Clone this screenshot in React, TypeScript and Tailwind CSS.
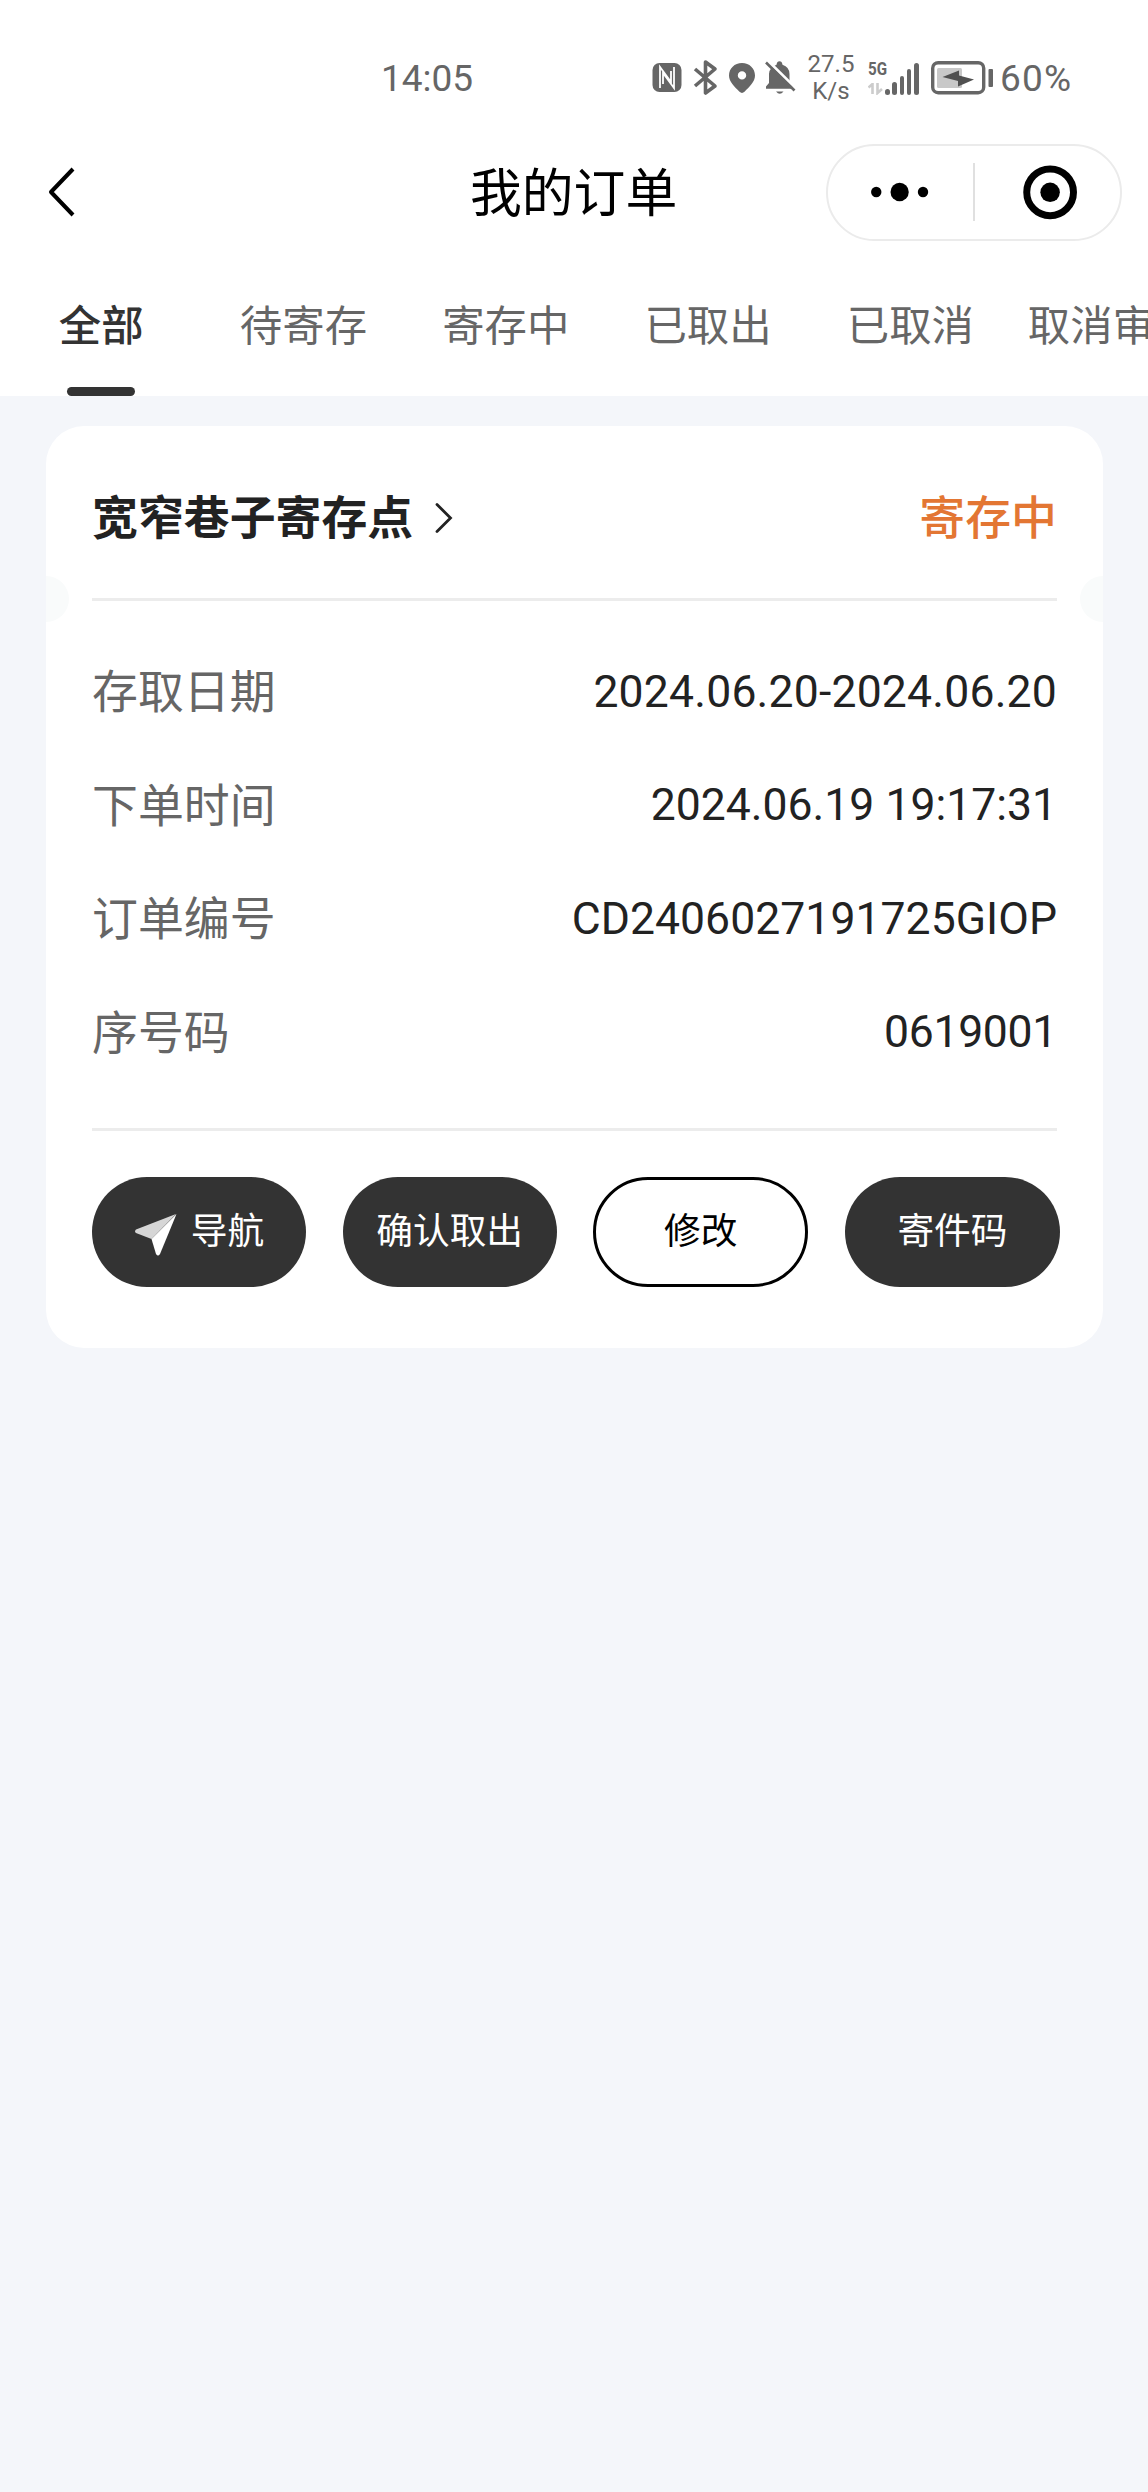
interface DetailRow {
    label: string
    value: string
    spacing: string
}

const tabs = ["全部", "待寄存", "寄存中", "已取出", "已取消", "取消审核"]

const rows: DetailRow[] = [
    { label: "存取日期", value: "2024.06.20-2024.06.20", spacing: "tracking-[0.2px]" },
    { label: "下单时间", value: "2024.06.19 19:17:31", spacing: "tracking-normal" },
    { label: "订单编号", value: "CD2406027191725GIOP", spacing: "tracking-[0.05px]" },
    { label: "序号码", value: "0619001", spacing: "tracking-[-0.3px]" },
]

function StatusIcons() {
    return (
        <svg width="144" height="36" viewBox="652 60 144 36" className="shrink-0" fill="#666">
            {/* nfc */}
            <rect x="652.5" y="63" width="29" height="29" rx="7" />
            <path d="M660 88V67L671 82V71M674 67V88L663 73V84" fill="none" stroke="#fff" strokeWidth="1.800" />
            {/* bluetooth */}
            <path d="M695 69L715 86L705.500 93V62L715 69L695 86" fill="none" stroke="#666" strokeWidth="3.600" strokeLinejoin="round" />
            {/* location */}
            <path fillRule="evenodd" d="M742 63c-7.500 0-13 5.500-13 12.500 0 6.500 5.500 11 10.500 16.300q2.500 2.200 5 0C749.500 86.500 755 82 755 75.500 755 68.500 749.500 63 742 63zm0 8.200a4.200 4.200 0 1 1 0 8.400 4.200 4.200 0 0 1 0-8.400z" />
            {/* muted bell */}
            <path d="M766 88.800v-2.300l3-3.500V74q0-6.500 7.500-9.300Q777 61.300 779.500 61.300T782.500 64.700Q789.500 67 789.500 74v9l3.500 3.500v2.300z" />
            <path d="M776 91.500h7.500q-3.700 4.500-7.500 0z" />
            <path d="M767.500 60.500L796.500 89" stroke="#fff" strokeWidth="3" />
            <path d="M766 62.500L794.500 90.500" stroke="#666" strokeWidth="2.600" />
        </svg>
    )
}

function Signal() {
    return (
        <div className="ml-[13px] flex h-[34px] w-[52px] items-end">
            <div className="flex h-full w-[17px] shrink-0 flex-col justify-between">
                <span className="origin-left scale-x-[0.8] text-[19px] font-bold leading-[16px]">5G</span>
                <svg width="16" height="12" viewBox="0 0 16 12" fill="none" stroke="#ccc" strokeWidth="2.600">
                    <path d="M0.500 4.500L4.500 1V11" />
                    <path d="M9.500 0V10L14 6" />
                </svg>
            </div>
            <div className="flex h-full items-end gap-[2.800px]">
                <i className="h-[6px] w-[4.500px] rounded-sm bg-[#666]" />
                <i className="h-[13px] w-[4.500px] rounded-sm bg-[#666]" />
                <i className="h-[19px] w-[4.500px] rounded-sm bg-[#666]" />
                <i className="h-[26px] w-[4.500px] rounded-sm bg-[#666]" />
                <i className="h-[32px] w-[4.500px] rounded-sm bg-[#666]" />
            </div>
        </div>
    )
}

function Battery() {
    return (
        <svg width="63" height="34" viewBox="931 61 63 34" className="ml-[11px] shrink-0">
            <rect x="932.700" y="62.700" width="51" height="30" rx="5.500" fill="none" stroke="#666" strokeWidth="3.400" />
            <rect x="937" y="68" width="25" height="20" rx="1.500" fill="#c8c8c8" />
            <path d="M942.500 77L959 70.500V75.500L974 79.500L958 86.500V81z" fill="#505050" />
            <rect x="988.500" y="69" width="4.500" height="18" rx="1" fill="#666" />
        </svg>
    )
}

function StatusBar() {
    return (
        <div className="flex h-[130px] items-center pl-[381px] pt-[26px] font-[Roboto,sans-serif] text-[#666]">
            <span className="w-[271px] shrink-0 text-[37px] leading-none">14:05</span>
            <StatusIcons />
            <div className="ml-[11px] w-[48px] shrink-0 text-center text-[24px] leading-[27px]">
                <div>27.5</div>
                <div>K/s</div>
            </div>
            <Signal />
            <Battery />
            <span className="ml-[6px] text-[37px] leading-none tracking-[1.2px]">60%</span>
        </div>
    )
}

function NavBar() {
    return (
        <div className="flex h-[124px] items-center pl-[48px] pr-[26px]">
            <svg width="28" height="50" viewBox="0 0 28 50" fill="none" stroke="#000" strokeWidth="4" strokeLinejoin="round">
                <path d="M25 2L3 25L25 48" />
            </svg>
            <h1 className="ml-[394px] pb-[4px] text-[51.800px] leading-none text-black">我的订单</h1>
            <div className="ml-auto flex h-[97px] w-[296px] items-center rounded-full border-2 border-[#ebebeb]">
                <svg width="146" height="60" viewBox="828 162 146 60">
                    <circle cx="876.500" cy="192" r="5.200" />
                    <circle cx="900" cy="192" r="9.200" />
                    <circle cx="923.500" cy="192" r="5.200" />
                </svg>
                <div className="h-[58px] w-[1.500px] bg-[#e0e0e0]" />
                <svg width="146" height="60" viewBox="975 162 146 60">
                    <circle cx="1050.500" cy="192.300" r="23.500" fill="none" stroke="#000" strokeWidth="7" />
                    <circle cx="1050.500" cy="192.300" r="9.800" />
                </svg>
            </div>
        </div>
    )
}

function TabBar() {
    return (
        <div className="flex h-[142px] overflow-hidden">
            {tabs.map((tab, i) => (
                <div key={tab} className="flex w-[202.300px] shrink-0 flex-col items-center justify-between pt-[48px]">
                    <span className={i === 0
                        ? "whitespace-nowrap text-[42.400px] font-medium leading-[42px] text-[#333]"
                        : "whitespace-nowrap text-[42.400px] leading-[42px] text-[#666]"}>
                        {tab}
                    </span>
                    {i === 0 && <div className="h-[9px] w-[68px] rounded-full bg-[#333]" />}
                </div>
            ))}
        </div>
    )
}

function OrderCard() {
    return (
        <div className="relative mx-[46px] mt-[30px] h-[922px] w-[1057px] overflow-hidden rounded-[38px] bg-white px-[46px]">
            {/* ticket notches */}
            <div className="absolute left-[-23px] top-[150px] size-[46px] rounded-full bg-[#f9fbfb]" />
            <div className="absolute right-[-23px] top-[150px] size-[46px] rounded-full bg-[#f9fbfb]" />

            <div className="flex h-[175px] items-center justify-between border-b-[3px] border-[#ececec] pt-[6px]">
                <div className="flex items-center text-[45.900px] font-bold leading-none text-[#222]">
                    宽窄巷子寄存点
                    <svg width="18" height="30" viewBox="0 0 18 30" fill="none" stroke="#222" strokeWidth="2.800" className="ml-[22px] mt-[5px]">
                        <path d="M2 1.500L15.500 15L2 28.500" strokeLinecap="round" />
                    </svg>
                </div>
                <span className="text-[45.900px] font-medium leading-none text-[#e37633]">寄存中</span>
            </div>

            <div className="h-[530px] border-b-[3px] border-[#ececec] pt-[34px]">
                {rows.map(row => (
                    <div key={row.label} className="flex h-[113.500px] items-center justify-between">
                        <span className="pb-[5px] text-[45.900px] leading-none text-[#666]">{row.label}</span>
                        <span className={`font-[Roboto,sans-serif] text-[44.500px] leading-none text-[#222] ${row.spacing}`}>
                            {row.value}
                        </span>
                    </div>
                ))}
            </div>

            <div className="mr-[-3px] mt-[46px] flex justify-between text-[36.700px] leading-none text-white">
                <button className="flex h-[110px] w-[214px] items-center justify-center rounded-full bg-[#333] pb-[7px]">
                    <svg width="44" height="44" viewBox="0 0 44 44" className="mr-[13px] mt-[13px]">
                        <path d="M42 1L2 16.500Q0 18.500 2 20L17.500 26z" fill="#d6d6d6" />
                        <path d="M42.500 1L17.500 26L22 41Q24 44 26 41z" fill="#fff" />
                    </svg>
                    导航
                </button>
                <button className="h-[110px] w-[214px] rounded-full bg-[#333] pb-[7px]">确认取出</button>
                <button className="h-[110px] w-[215px] rounded-full border-[3px] border-black bg-white pb-[7px] text-black">修改</button>
                <button className="h-[110px] w-[215px] rounded-full bg-[#333] pb-[7px]">寄件码</button>
            </div>
        </div>
    )
}

function App() {
    return (
        <div className="h-[2492px] w-[1148px] overflow-hidden bg-[#f4f6fa] font-['Noto_Sans_CJK_SC',sans-serif]">
            <div className="bg-white">
                <StatusBar />
                <NavBar />
                <TabBar />
            </div>
            <OrderCard />
        </div>
    )
}

export default App
